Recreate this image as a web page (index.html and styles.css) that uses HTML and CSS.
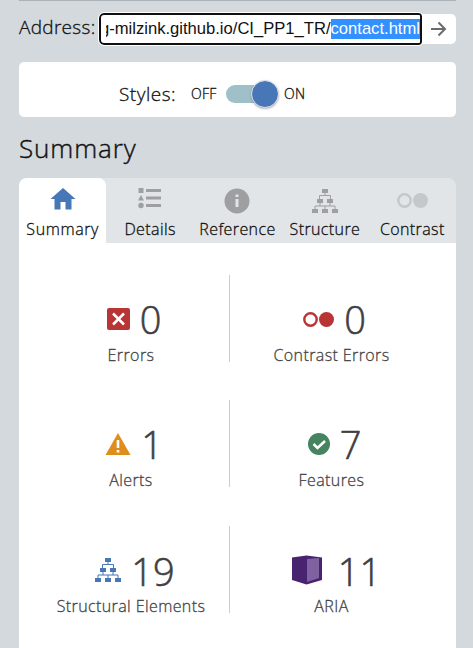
FILE: index.html
```html
<!DOCTYPE html>
<html lang="en">
<head>
<meta charset="utf-8">
<title>Summary</title>
<link rel="stylesheet" href="styles.css">
</head>
<body>
<svg class="defs" width="0" height="0">
  <symbol id="tree" viewBox="0 0 26 24">
    <path d="M10 0h6v4h-6zM5 10h6v4H5zM15 10h6v4h-6zM0 20h6v4H0zM10 20h6v4h-6zM20 20h6v4h-6z"/>
    <path d="M13 4v2.500M7.500 10V6.500h11V10M8 14v3M18 14v3M3 20v-3h20v3M13 17v3" fill="none" stroke="currentColor"/>
  </symbol>
  <symbol id="circles" viewBox="0 0 31 15">
    <circle cx="7.5" cy="7.5" r="6.2" fill="none" stroke="currentColor" stroke-width="2.4"/>
    <circle cx="23.5" cy="7.5" r="7.5"/>
  </symbol>
</svg>
<main class="sidebar">
  <form class="address">
    <label class="address-label">Address:</label>
    <div class="url"><span class="url-text">g-milzink.github.io/CI_PP1_TR/<mark>contact.html</mark></span></div>
    <div class="go"><svg width="17" height="16" viewBox="0 0 17 16"><path d="M1 8h14M8.500 1.500L15 8l-6.500 6.500" fill="none" stroke="#6b6b6b" stroke-width="2"/></svg></div>
  </form>
  <section class="styles">
    <span class="styles-label">Styles:</span>
    <span class="off">OFF</span>
    <span class="switch"><span class="knob"></span></span>
    <span class="on">ON</span>
  </section>
  <h1>Summary</h1>
  <nav class="tabs">
    <div class="tab active"><div class="tab-icon"><svg width="26" height="22" viewBox="0 0 26 22"><path d="M13 0L25.500 11H21.500V21.500H15.500V14H10.500V21.500H4.500V11H.5z"/></svg></div><span>Summary</span></div>
    <div class="tab"><div class="tab-icon details"><svg width="24" height="21" viewBox="0 0 24 21"><path d="M.5 0h5v5h-5zM3 7l3 5.500H0zM8 1h15v3H8zM8 8.500h15v3H8zM8 16h15v3H8z"/><circle cx="3" cy="17.500" r="2.700"/></svg></div><span>Details</span></div>
    <div class="tab"><div class="tab-icon"><svg width="26" height="26" viewBox="0 0 26 26"><circle cx="13" cy="13" r="12.500"/><path d="M11.500 6.500h3v2.500h-3zM11.500 11h3v8h-3z" fill="#e1e5e8"/></svg></div><span>Reference</span></div>
    <div class="tab"><div class="tab-icon"><svg width="26" height="24"><use href="#tree"/></svg></div><span>Structure</span></div>
    <div class="tab"><div class="tab-icon faint"><svg width="31" height="15"><use href="#circles"/></svg></div><span>Contrast</span></div>
  </nav>
  <section class="panel">
    <div class="stat"><div class="count red"><svg width="23" height="22" viewBox="0 0 23 22"><rect width="23" height="22" rx="2"/><path d="M6 5.500l11 11M17 5.500l-11 11" stroke="#fff" stroke-width="2.500"/></svg><b>0</b></div><span>Errors</span></div>
    <div class="stat"><div class="count red"><svg width="31" height="15"><use href="#circles"/></svg><b>0</b></div><span>Contrast Errors</span></div>
    <div class="stat"><div class="count orange"><svg width="26" height="22" viewBox="0 0 26 22"><path d="M13 0l12.500 22H.5z"/><path d="M11.700 7h2.600v8h-2.600zM11.700 17h2.600v2.500h-2.600z" fill="#fff"/></svg><b>1</b></div><span>Alerts</span></div>
    <div class="stat"><div class="count green"><svg width="22" height="22" viewBox="0 0 22 22"><circle cx="11" cy="11" r="11"/><path d="M5.500 11l4 4 7.500-7" fill="none" stroke="#fff" stroke-width="2.500"/></svg><b>7</b></div><span>Features</span></div>
    <div class="stat last"><div class="count blue"><svg width="26" height="24"><use href="#tree"/></svg><b>19</b></div><span>Structural Elements</span></div>
    <div class="stat last"><div class="count purple"><svg width="30" height="30" viewBox="0 0 30 30"><path d="M0 2.500L14.500.5 30 2.500v22.500L14.500 29.500 0 25z"/><path d="M15 4l12-1v20L15 27z" fill="#8062a0"/></svg><b>11</b></div><span>ARIA</span></div>
  </section>
</main>
</body>
</html>
```
FILE: styles.css
```css
* { box-sizing: border-box; }
body { margin: 0; background: #d3d9dd; font: 300 16px/22px "Open Sans", "Noto Sans", sans-serif; color: #111; overflow: hidden; -webkit-text-stroke: .3px; }
svg { display: block; fill: currentColor; flex: none; }
.defs { position: absolute; }
.sidebar { width: 437px; height: 648px; margin-left: 19px; border-top: 1px solid #abb2b7; display: flex; flex-direction: column; }
.address { display: flex; height: 32px; margin-top: 12px; align-items: center; }
.address-label { width: 80px; font-size: 19px; letter-spacing: .3px; line-height: 26px; white-space: nowrap; padding-bottom: 4px; }
.url { width: 323px; height: 32px; border: 2px solid #101010; border-radius: 5px 3px 3px 5px; outline: 1px solid #fff; background: #fff; display: flex; justify-content: flex-end; align-items: center; padding-left: 5px; position: relative; z-index: 1; }
.url-text { width: 314px; overflow: hidden; display: flex; justify-content: flex-end; white-space: nowrap; font: 16.6px/20px "Liberation Sans", sans-serif; padding-bottom: 1px; -webkit-text-stroke: 0; }
mark { background: #3390ff; color: #fff; }
.go { flex: 1; height: 30px; background: #fff; border-radius: 0 5px 5px 0; display: flex; align-items: center; padding-left: 8px; }
.styles { height: 55px; margin-top: 17px; background: #fff; border-radius: 5px; display: flex; align-items: center; padding: 8px 0 0 100px; }
.styles-label { width: 72px; font-size: 19px; letter-spacing: .5px; }
.off, .on { font-size: 14px; padding-top: 1px; letter-spacing: .2px; }
.off { width: 35px; }
.switch { width: 52px; height: 18px; border-radius: 9px; background: #9fc0c9; display: flex; justify-content: flex-end; align-items: center; margin-right: 6px; }
.knob { width: 26px; height: 26px; border-radius: 50%; background: #4877b7; box-shadow: 0 1px 3px #667; outline: 1px solid #d8dee9; }
h1 { font-size: 26px; letter-spacing: .9px; line-height: 36px; font-weight: 300; margin: 13px 0 0; height: 48px; -webkit-text-stroke: .4px; }
.tabs { display: grid; grid-template-columns: repeat(5, 1fr); height: 65px; background: #e1e5e8; border-radius: 8px 8px 0 0; flex: none; }
.tab { display: flex; flex-direction: column; align-items: center; white-space: nowrap; letter-spacing: .4px; }
.tab-icon { height: 40px; display: flex; align-items: center; color: #9d9fa1; padding-top: 5px; }
.details { padding-bottom: 4px; }
.faint { color: #c5c8ca; }
.active { background: #fff; border-radius: 8px 8px 0 0; letter-spacing: .6px; }
.active .tab-icon { color: #4877b7; padding-top: 1px; }
.panel { flex: 1; background: #fff; padding: 32px 24px 0 13px; display: grid; grid-template-columns: 198px 202px; grid-template-rows: 87px 87px 87px; row-gap: 38px; color: #444; }
.stat { display: flex; flex-direction: column; align-items: center; white-space: nowrap; padding: 21px 0 0 1px; letter-spacing: .4px; }
.stat:nth-child(odd) { border-right: 1px solid #ccc; }
.last { margin-top: 1px; height: 87px; }
.count { height: 48px; display: flex; align-items: center; gap: 10px; padding: 0 0 2px 6px; letter-spacing: 0; }
.last .count { padding-left: 8px; }
.count b { font-size: 38px; font-weight: 300; line-height: 48px; color: #3f3f42; -webkit-text-stroke: .6px; }
.last b { padding-top: 1px; }
.last .purple { gap: 16px; padding-left: 10px; }
.red { color: #b93434; } .orange { color: #df8d1d; } .green { color: #448460; } .blue { color: #4877b5; } .purple { color: #482370; }
```
